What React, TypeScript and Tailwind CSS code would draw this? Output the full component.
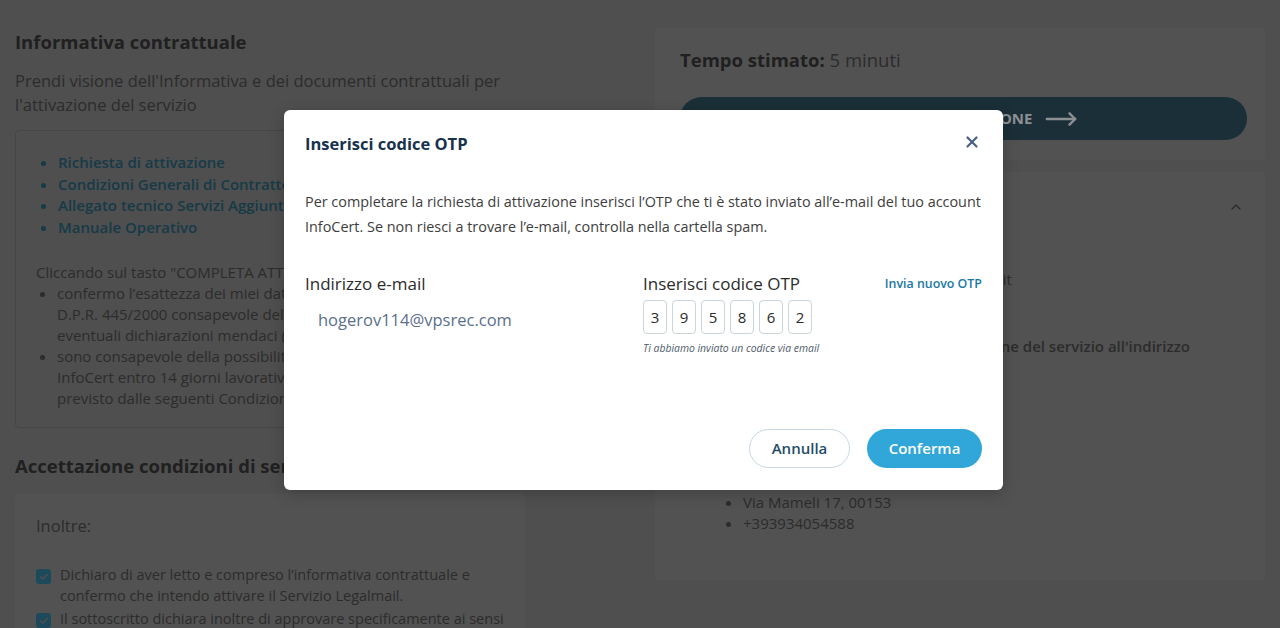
import React from 'react';
import { ChevronUp, X, Check, MoveRight } from 'lucide-react';

const docs = [
  'Richiesta di attivazione',
  'Condizioni Generali di Contratto',
  'Allegato tecnico Servizi Aggiuntivi',
  'Manuale Operativo',
];

const otp = ['3', '9', '5', '8', '6', '2'];

function Checkbox() {
  return (
    <span className="mt-[4px] flex h-[15px] w-[15px] shrink-0 items-center justify-center rounded-[3px] bg-[#1d4a5b]">
      <Check size={10} strokeWidth={3.5} className="text-[#4f4f4f]" />
    </span>
  );
}

export default function App() {
  return (
    <div className="relative h-[628px] w-[1280px] overflow-hidden bg-[#4f4f4f] font-['Open_Sans',sans-serif]">
      {/* page behind the modal */}
      <div className="flex gap-[130px] px-[15px] pt-[28px]">
        <div className="w-[510px] shrink-0">
          <h2 className="pt-[2px] text-[18.5px] font-bold leading-[24px] text-[#202020]">Informativa contrattuale</h2>
          <p className="mt-[15px] text-[16.5px] leading-[24px] text-[#2c2c2c]">
            Prendi visione dell'Informativa e dei documenti contrattuali per l'attivazione del servizio
          </p>
          <div className="mt-[13px] rounded-[4px] border border-[#464646] px-[20px] pb-[18px] pt-[21px]">
            <ul className="list-disc pl-[22px] text-[15px] font-semibold leading-[21.5px] text-[#163a48]">
              {docs.map((d) => (
                <li key={d}>{d}</li>
              ))}
            </ul>
            <p className="mt-[24px] text-[15px] leading-[21px] text-[#2c2c2c]">
              Cliccando sul tasto "COMPLETA ATTIVAZIONE" dichiaro che:
            </p>
            <ul className="list-disc whitespace-nowrap pl-[21px] text-[15px] leading-[21px] text-[#2c2c2c]">
              <li>
                confermo l’esattezza dei miei dati ai sensi del
                <br />
                D.P.R. 445/2000 consapevole delle sanzioni per
                <br />
                eventuali dichiarazioni mendaci (art. 76);
              </li>
              <li>
                sono consapevole della possibilità di recesso da
                <br />
                InfoCert entro 14 giorni lavorativi, come
                <br />
                previsto dalle seguenti Condizioni Generali.
              </li>
            </ul>
          </div>
          <h2 className="mt-[26px] text-[18.5px] font-bold leading-[24px] text-[#202020]">Accettazione condizioni di servizio</h2>
          <div className="mt-[15px] rounded-[4px] bg-[#525252] px-[21px] pt-[21px]">
            <p className="text-[16.5px] leading-[24px] text-[#2c2c2c]">Inoltre:</p>
            <div className="mt-[27px] flex flex-col gap-[3px] text-[14.5px] leading-[20.5px] text-[#2c2c2c]">
              <div className="flex gap-[9px]">
                <Checkbox />
                <span>Dichiaro di aver letto e compreso l’informativa contrattuale e confermo che intendo attivare il Servizio Legalmail.</span>
              </div>
              <div className="flex gap-[9px]">
                <Checkbox />
                <span>Il sottoscritto dichiara inoltre di approvare specificamente ai sensi degli artt. 1341 e 1342 c.c.</span>
              </div>
            </div>
          </div>
        </div>

        <div className="flex w-[610px] shrink-0 flex-col gap-[12px]">
          <div className="rounded-[4px] bg-[#525252] px-[25px] pb-[20px] pt-[20px]">
            <p className="text-[18.5px] leading-[24px] text-[#202020]">
              <span className="font-bold">Tempo stimato:</span> <span className="text-[#2c2c2c]">5 minuti</span>
            </p>
            <button className="mt-[25px] flex h-[43px] w-[567px] items-center justify-center gap-[12px] rounded-full bg-[#1b2f38] text-[15px] font-bold text-[#8c9093]">
              COMPLETA ATTIVAZIONE
              <MoveRight size={34} strokeWidth={1.7} />
            </button>
          </div>
          <div className="h-[408px] rounded-[4px] bg-[#525252] px-[25px] pt-[23px]">
            <div className="flex items-center justify-between">
              <h3 className="text-[16.5px] font-bold text-[#202020]">Riepilogo dati</h3>
              <ChevronUp size={16} className="mr-[-4px] text-[#2c2c2c]" />
            </div>
            <div className="mt-[49px] text-[15px] leading-[21px] text-[#2c2c2c]">
              <p className="pl-[62px]">Indirizzo PEC: hogerov114@legalmail.it</p>
              <p className="mt-[46px] pl-[35px] font-semibold">Riceverai le comunicazioni sull'attivazione del servizio all'indirizzo</p>
              <ul className="mt-[135px] list-disc pl-[63px]">
                <li>Via Mameli 17, 00153</li>
                <li>+393934054588</li>
              </ul>
            </div>
          </div>
        </div>
      </div>

      {/* modal */}
      <div className="absolute inset-0 flex justify-center pl-[7px] pt-[110px]">
        <div className="flex h-[380px] w-[719px] flex-col rounded-[6px] bg-white px-[21px] pb-[22px] shadow-[0_4px_16px_rgba(0,0,0,0.2)]">
          <div className="flex items-center justify-between pt-[22px]">
            <h1 className="text-[16.5px] font-bold leading-[24px] text-[#17324d]">Inserisci codice OTP</h1>
            <X size={18} strokeWidth={3} className="mb-[5px] mr-[1px] text-[#4d6480]" />
          </div>
          <p className="mt-[33px] text-[14.4px] leading-[25px] text-[#3d3d3d]">
            Per completare la richiesta di attivazione inserisci l’OTP che ti è stato inviato all’e-mail del tuo account
            InfoCert. Se non riesci a trovare l’e-mail, controlla nella cartella spam.
          </p>
          <div className="mt-[33px] flex">
            <div className="w-[338px] shrink-0">
              <p className="text-[17px] leading-[24px] text-[#2b2b2b]">Indirizzo e-mail</p>
              <p className="mt-[12px] pl-[13px] text-[16.5px] leading-[24px] text-[#5a6f8b]">hogerov114@vpsrec.com</p>
            </div>
            <div className="flex-1">
              <div className="flex items-center justify-between">
                <p className="text-[17px] leading-[24px] text-[#2b2b2b]">Inserisci codice OTP</p>
                <a className="text-[12.4px] font-semibold leading-[20px] text-[#1a78a6]">Invia nuovo OTP</a>
              </div>
              <div className="mt-[4px] flex gap-[5px]">
                {otp.map((d, i) => (
                  <span
                    key={i}
                    className="flex h-[34px] w-[24px] items-center justify-center rounded-[4px] border border-[#c9d5df] text-[15px] text-[#2b2b2b]"
                  >
                    {d}
                  </span>
                ))}
              </div>
              <p className="mt-[7px] text-[10.4px] italic leading-[14px] text-[#4d5b6b]">Ti abbiamo inviato un codice via email</p>
            </div>
          </div>
          <div className="mt-auto flex justify-end gap-[17px]">
            <button className="h-[39px] w-[101px] rounded-full border border-[#c9d8e3] text-[15px] font-semibold text-[#1f4d66]">
              Annulla
            </button>
            <button className="h-[39px] w-[115px] rounded-full bg-[#30a6d9] text-[15px] font-semibold text-white">
              Conferma
            </button>
          </div>
        </div>
      </div>
    </div>
  );
}
